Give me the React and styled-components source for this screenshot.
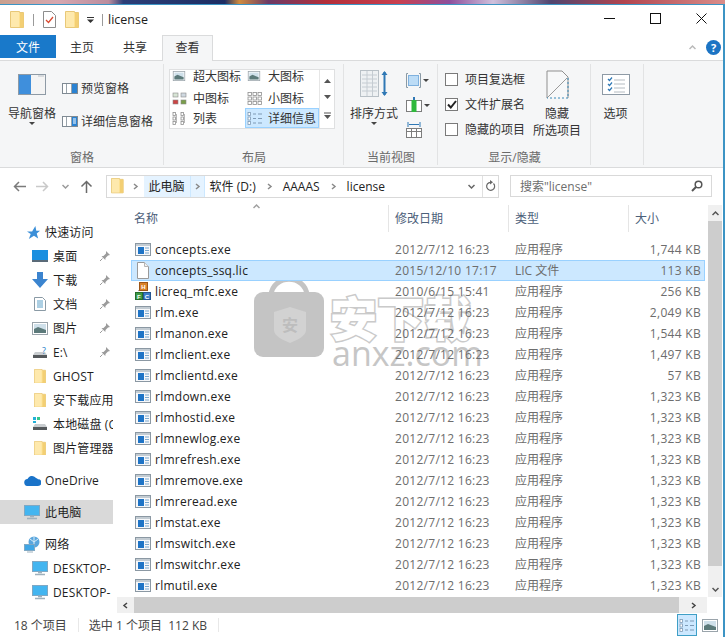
import React from 'react';
import styled, { createGlobalStyle } from 'styled-components';

const Global = createGlobalStyle`
  html, body { margin: 0; padding: 0; background: #fff; }
  body { font-family: "Open Sans", "Noto Sans CJK SC", sans-serif; font-size: 12px; color: #222; }
  * { box-sizing: border-box; }
  svg { display: block; flex: none; }
`;

const Page = styled.div`
  width: 725px; height: 637px; overflow: hidden; display: flex; flex-direction: column; background: #fff;
`;
const Wallpaper = styled.div`
  height: 4px; flex: none;
  background: linear-gradient(90deg, #c9a08e 0, #d6a7b0 8%, #bb8d9e 15%, #2c3f78 17%, #1d2d63 31%, #d08b3f 33%, #6c3a66 37%, #b42f3a 45%, #c94050 55%, #8e4f9c 62%, #cfc0dc 68%, #50456f 76%, #b2454f 86%, #d98d8a 100%);
`;
const Win = styled.div`
  flex: 1; min-height: 0; display: flex; flex-direction: column;
  border-top: 1px solid #3c94c4; border-right: 2px solid #3c94c4;
`;
const TitleBar = styled.div`
  height: 30px; flex: none; display: flex; align-items: center; padding: 0 0 1px 10px; position: relative;
`;
const TitleSep = styled.span`
  width: 1px; height: 12px; background: #9a9a9a; margin: ${p => p.$m || '0 9px'};
`;
const QatItem = styled.div`
  display: flex; align-items: center; margin-left: ${p => p.$ml}px;
`;
const TitleText = styled.span`
  font-size: 12.5px; color: #1c1c1c; margin-left: 5px; padding-bottom: 1px;
`;
const WinCtrls = styled.div`
  margin-left: auto; display: flex; align-items: center; gap: 35px; padding: 0 16px 2px 0;
`;
const TabRow = styled.div`
  height: 26px; flex: none; display: flex; align-items: flex-start; border-bottom: 1px solid #dadbdc;
`;
const FileTab = styled.div`
  width: 56px; height: 23px; background: #1979ca; color: #fff; display: flex; align-items: center; justify-content: center; font-size: 12px;
`;
const Tab = styled.div`
  width: ${p => p.$w}px; height: ${p => p.$active ? 26 : 23}px; display: flex; align-items: center; justify-content: center; font-size: 12px; color: #333;
  ${p => p.$active && `
    background: #f5f6f7; border: 1px solid #dadbdc; border-bottom: 0; padding-bottom: 3px;
  `}
`;
const TabEnd = styled.div`
  margin-left: auto; display: flex; align-items: center; gap: 10px; height: 24px; padding-right: 2px;
`;
const Ribbon = styled.div`
  height: 107px; flex: none; display: flex; background: #f5f6f7; border-bottom: 1px solid #dadbdc;
`;
const Group = styled.div`
  width: ${p => p.$w}px; flex: none; display: flex; flex-direction: column; position: relative;
  &::after { content: ""; position: absolute; right: 0; top: 3px; bottom: 2px; width: 1px; background: #e2e3e4; }
`;
const GroupBody = styled.div`
  flex: 1; min-height: 0; display: flex;
`;
const GroupLabel = styled.div`
  height: 22px; flex: none; display: flex; align-items: flex-start; justify-content: center; color: #6a6a6a; font-size: 12px; line-height: 25px;
`;
const LargeBtn = styled.div`
  width: ${p => p.$w}px; flex: none; display: flex; flex-direction: column; align-items: center; padding-top: ${p => p.$top}px; color: #333; line-height: 17px; font-size: 12px; white-space: nowrap;
`;
const LargeText = styled.div`
  margin-top: ${p => p.$mt}px; text-align: center;
`;
const Caret = styled.div`
  width: 0; height: 0; border-left: 3px solid transparent; border-right: 3px solid transparent; border-top: 3px solid #444;
`;
const SmallCol = styled.div`
  display: flex; flex-direction: column; gap: ${p => p.$gap}px; padding-top: ${p => p.$top}px; margin-left: ${p => p.$ml || 0}px;
`;
const SmallBtn = styled.div`
  display: flex; align-items: center; gap: 3px; color: #333; white-space: nowrap; height: 16px;
`;
const Gallery = styled.div`
  width: 166px; height: 60px; margin: 8px 0 0 5px; border: 1px solid #dfe0e1; background: #fff; display: flex;
`;
const GalleryGrid = styled.div`
  width: 149px; display: grid; grid-template-columns: 75px 74px; grid-template-rows: 18px 20px 20px; overflow: hidden;
`;
const GalleryItem = styled.div`
  display: flex; align-items: center; gap: ${p => p.$top ? 7 : 5}px; padding-left: 2px; color: #333; white-space: nowrap;
  ${p => p.$sel && 'background: #cce8ff; border: 1px solid #99d1ff; padding-left: 1px;'}
  ${p => p.$top && 'padding-bottom: 6px;'}
`;
const GalleryScroll = styled.div`
  flex: 1; border-left: 1px solid #e6e6e6; display: flex; flex-direction: column; align-items: center; justify-content: space-around; padding: 3px 0;
`;
const SortIconBtn = styled.div`
  display: flex; flex-direction: column; gap: 7px; padding-top: 10px; margin-left: 2px;
`;
const ViewIconRow = styled.div`
  display: flex; align-items: center; gap: 2px; height: 18px;
`;
const CheckCol = styled.div`
  display: flex; flex-direction: column; gap: 9px; padding: 10px 0 0 7px; width: 96px;
`;
const CheckRow = styled.div`
  display: flex; align-items: center; gap: 7px; height: 16px; color: #333; white-space: nowrap;
`;
const Check = styled.div`
  width: 13px; height: 13px; border: 1px solid #7a7a7a; background: #fff; display: flex; align-items: center; justify-content: center;
`;
const AddrRow = styled.div`
  height: 32px; flex: none; display: flex; align-items: center; padding-top: 4px;
`;
const NavBtns = styled.div`
  width: 106px; flex: none; display: flex; align-items: center; padding-left: 12px;
`;
const NavBtn = styled.div`
  width: ${p => p.$w}px; display: flex; justify-content: center;
`;
const AddrBox = styled.div`
  width: 393px; height: 23px; border: 1px solid #d9d9d9; display: flex; align-items: center; flex: none;
`;
const Crumb = styled.div`
  height: 21px; display: flex; align-items: center; color: #222; white-space: nowrap; padding: ${p => p.$pad || '0 5px'};
  ${p => p.$hover && 'background: #e5f3ff;'}
`;
const CrumbSep = styled.div`
  width: ${p => p.$w || 15}px; height: 21px; display: flex; align-items: center; justify-content: center;
  ${p => p.$hover && 'background: #e5f3ff; border-left: 1px solid #cce8ff; border-right: 1px solid #cce8ff;'}
`;
const AddrEnd = styled.div`
  margin-left: auto; display: flex; align-items: center; height: 21px;
`;
const AddrEndCell = styled.div`
  width: 16px; display: flex; align-items: center; justify-content: center; height: 21px;
  ${p => p.$line && 'border-left: 1px solid #e0e0e0; margin-left: 3px;'}
`;
const SearchBox = styled.div`
  width: 202px; height: 22px; margin-left: 11px; border: 1px solid #d9d9d9; display: flex; align-items: center; justify-content: space-between; padding: 0 8px 0 9px; color: #6d6d6d; flex: none;
`;
const Main = styled.div`
  flex: 1; min-height: 0; display: flex; position: relative;
`;
const Nav = styled.div`
  width: 113px; flex: none; padding-top: 20px; overflow: hidden;
`;
const NavGroup = styled.div`
  margin-bottom: 8px;
`;
const NavRow = styled.div`
  height: 24px; width: 113px; display: flex; align-items: center; padding-left: ${p => p.$ind}px; color: #1f1f1f; white-space: nowrap; overflow: hidden;
  ${p => p.$sel && 'background: #d9d9d9;'}
`;
const NavIcon = styled.div`
  width: ${p => p.$w || 21}px; flex: none; display: flex; align-items: center;
`;
const NavLabel = styled.span`
  flex: none; letter-spacing: .15px;
`;
const PinWrap = styled.div`
  position: absolute; left: 99px; width: 12px; height: 12px; display: flex;
`;
const NavRowWrap = styled.div`
  position: relative; display: flex; align-items: center;
`;
const FilePane = styled.div`
  margin-left: 4px; flex: 1; min-width: 0; display: grid; grid-template-columns: 1fr 16px; grid-template-rows: 397px 16px; position: relative;
`;
const ListArea = styled.div`
  padding-left: 14px; overflow: hidden; position: relative;
`;
const Header = styled.div`
  height: 35px; display: grid; grid-template-columns: 257px 120px 120px 80px; padding-top: 5px; position: relative;
`;
const HeadCell = styled.div`
  height: 27px; padding: 0 0 2px ${p => p.$first ? 3 : 6}px; display: flex; align-items: center; color: #4c607a; font-size: 12px;
  ${p => !p.$first && 'border-left: 1px solid #e5e5e5;'}
`;
const SortMark = styled.div`
  position: absolute; left: 122px; top: 3px;
`;
const Rows = styled.div`
  margin-top: 4px;
`;
const Row = styled.div`
  height: 21px; width: 574px; display: grid; grid-template-columns: 257px 120px 120px 77px; align-items: center; border: 1px solid transparent; padding-bottom: 2px; position: relative;
  ${p => p.$sel && 'background: #cce8ff; border-color: #99d1ff;'}
`;
const NameCell = styled.div`
  display: flex; align-items: center; gap: 4px; padding-left: 3px; color: #222; letter-spacing: .25px;
`;
const DetailCell = styled.div`
  color: #6d6d6d; padding-left: ${p => p.$right ? 0 : 6}px; padding-right: ${p => p.$right ? 5 : 0}px; text-align: ${p => p.$right ? 'right' : 'left'}; white-space: nowrap; letter-spacing: ${p => p.$sp || 0}px;
`;
const VScroll = styled.div`
  margin: 5px 1px 0 1px; background: #f0f0f0; display: flex; flex-direction: column; align-items: center; height: 392px;
`;
const ScrollEnd = styled.div`
  height: 16px; flex: none; width: 100%; display: flex; align-items: center; justify-content: center;
  ${p => p.$end && 'margin-top: auto;'}
`;
const VThumb = styled.div`
  width: 100%; height: 345px; background: #cdcdcd; flex: none;
`;
const HScroll = styled.div`
  background: #f0f0f0; display: flex; align-items: center;
`;
const HEnd = styled.div`
  width: ${p => p.$w}px; height: 100%; flex: none; display: flex; align-items: center; justify-content: center;
`;
const HThumb = styled.div`
  width: 545px; height: 100%; background: #cdcdcd; flex: none;
`;
const Status = styled.div`
  height: 22px; flex: none; display: flex; align-items: center; color: #444; padding: 0 0 2px 14px; position: relative;
`;
const StatusSep = styled.span`
  width: 1px; height: 14px; background: #e8e8e8; margin: ${p => p.$m};
`;
const ViewBtns = styled.div`
  margin-left: auto; display: flex; align-items: center; gap: 5px; padding-right: 6px; height: 100%;
`;
const ViewBtn = styled.div`
  width: ${p => p.$w}px; height: 22px; display: flex; align-items: center; justify-content: center;
  ${p => p.$on && 'background: #cce8ff; border: 1px solid #3f9fc6;'}
`;
const Watermark = styled.div`
  position: absolute; left: 254px; top: 77px; width: 216px; height: 90px; pointer-events: none; display: flex; gap: 6px;
`;
const WmText = styled.div`
  display: flex; flex-direction: column; align-items: flex-start; margin-top: 14px;
`;
const WmCjk = styled.div`
  font-family: "Noto Sans CJK SC", sans-serif; font-weight: 900; font-size: 47px; line-height: 50px; color: #fff;
  -webkit-text-stroke: 3px #cacaca; paint-order: stroke fill; white-space: nowrap;
`;
const WmLatin = styled.div`
  font-family: "Open Sans", sans-serif; font-size: 34px; line-height: 24px; color: #c6c6c6; white-space: nowrap; margin-left: 2px;
`;
const WmLockText = styled.text`
  font-family: "Noto Sans CJK SC", sans-serif; font-size: 16px; font-weight: 700; fill: #bdbdbd;
`;
const IconLetter = styled.text`
  font-family: "Liberation Sans", sans-serif; font-size: 6px; font-weight: 700; fill: #fff;
`;

const Folder = ({ s = 1 }) => (
  <svg width={14 * s} height={17 * s} viewBox="0 0 14 17">
    <path d="M.5.5h9v1h4v15H.5z" fill="#fde08f" stroke="#e8c878" />
    <path d="M10 2h3.5v14.5H10z" fill="#f3cf74" />
    <path d="M1 1h8v15H1z" fill="#fee9ad" />
  </svg>
);
const Exe = () => (
  <svg width="16" height="13" viewBox="0 0 16 13">
    <rect x=".5" y=".5" width="15" height="12" fill="#f7f8fa" stroke="#8b98a3" />
    <rect x="1" y="1" width="14" height="2" fill="#c3ccd3" />
    <rect x="3" y="4" width="6" height="7" fill="#1f74c6" />
    <path d="M10 5h4M10 7.5h4M10 10h4" stroke="#7aa7cd" />
  </svg>
);
const Doc = () => (
  <svg width="16" height="17" viewBox="0 0 16 17">
    <path d="M2.500.5h7l4 4v12h-11z" fill="#fff" stroke="#9a9a9a" />
    <path d="M9.500.5v4h4" fill="#f2f2f2" stroke="#b5b5b5" />
  </svg>
);
const ReqIcon = () => (
  <svg width="16" height="18" viewBox="0 0 16 18">
    <path d="M3 9l5-4 5 4" fill="none" stroke="#a7a7a7" />
    <rect x="4.500" y="0.500" width="8" height="8" fill="#d9822b" stroke="#9b5518" />
    <IconLetter x="6.300" y="7">H</IconLetter>
    <rect x=".5" y="10.500" width="7" height="7" fill="#3e9a45" stroke="#256d2c" />
    <IconLetter x="2" y="16.500">F</IconLetter>
    <rect x="8.500" y="10.500" width="7" height="7" fill="#3b7dc9" stroke="#25558f" />
    <IconLetter x="9.800" y="16.500">C</IconLetter>
  </svg>
);
const Pin = () => (
  <svg width="12" height="12" viewBox="0 0 12 12">
    <path d="M7 1l4 4-2 .5-2.500 2.500-.2 2L2.500 6.200l2-.3L7 3.500z" fill="#9b9b9b" />
    <path d="M3.500 8.500L1 11" stroke="#9b9b9b" />
  </svg>
);
const Chev = ({ c = '#8a8a8a', d = 'right' }) => (
  <svg width="7" height="7" viewBox="0 0 7 7">
    <path d={d === 'right' ? 'M2 1l3 2.500L2 6' : d === 'down' ? 'M.5 2L3.500 5 6.500 2' : d === 'up' ? 'M.5 5L3.500 2 6.500 5' : 'M5 1L2 3.500 5 6'} fill="none" stroke={c} strokeWidth="1.500" />
  </svg>
);
const Screen = ({ w = 16 }) => (
  <svg width={w} height="15" viewBox="0 0 16 15">
    <rect x=".5" y=".5" width="15" height="10" fill="#43b5f0" stroke="#7fa8c4" />
    <path d="M6 11.500h4M3 13.500h10" stroke="#9fb1bd" strokeWidth="1.500" />
  </svg>
);
const Photo = ({ w = 16, h = 13 }) => (
  <svg width={w} height={h} viewBox="0 0 16 13">
    <rect x=".5" y=".5" width="15" height="12" fill="#fff" stroke="#9aa4ab" />
    <rect x="2" y="2" width="12" height="9" fill="#cfe0ea" />
    <path d="M2 7l4-2 8 3v3H2z" fill="#5c7a7a" />
  </svg>
);
const TinyPhoto = ({ x, y, c = '#7c9' }) => <rect x={x} y={y} width="5" height="4" fill={c} stroke="#8a8a8a" strokeWidth=".6" />;
const ListGlyph = ({ kind }) => (
  <svg width="16" height="13" viewBox="0 0 16 13">
    {kind === 'medium' && <><TinyPhoto x="1" y="1" c="#d7e4d5" /><TinyPhoto x="9" y="1" c="#cfd8e0" /><TinyPhoto x="1" y="8" c="#c44" /><TinyPhoto x="9" y="8" c="#7a9e4a" /></>}
    {kind === 'small' && [0, 1, 2].map(r => [0, 1, 2].map(c => <rect key={`${r}${c}`} x={1 + c * 5} y={r * 4.500 + .5} width="3.500" height="3" fill="#fff" stroke="#8f8f8f" strokeWidth=".8" />))}
    {kind === 'list' && [0, 1].map(c => <g key={c}>{[0, 1, 2].map(r => <rect key={r} x={1 + c * 8} y={r * 4.500 + .5} width="2.500" height="3" fill="#fff" stroke="#8f8f8f" strokeWidth=".8" />)}<path d={`M${4.500 + c * 8} 2v9`} stroke="#b8b8b8" /></g>)}
    {kind === 'detail' && [0, 1, 2].map(r => <g key={r}><rect x="1" y={r * 4.500 + .5} width="2.500" height="3" fill="#fff" stroke="#7e9ab5" strokeWidth=".8" /><path d={`M6 ${r * 4.500 + 2}h3M11 ${r * 4.500 + 2}h4`} stroke="#7e9ab5" /></g>)}
  </svg>
);
const PaneIcon = ({ side }) => (
  <svg width="16" height="11" viewBox="0 0 16 11">
    <rect x=".5" y=".5" width="15" height="10" fill="#fff" stroke="#7f8a93" />
    <rect x="10" y="1" width="5" height="9" fill="#2a82d2" />
    <path d="M4.500 1v9M9.500 1v9" stroke="#9aa4ab" />
    {side === 'lines' && <path d="M11 3h3M11 5h3M11 7h3" stroke="#fff" />}
  </svg>
);

const files = [
  ['concepts.exe', '2012/7/12 16:23', '应用程序', '1,744 KB'],
  ['concepts_ssq.lic', '2015/12/10 17:17', 'LIC 文件', '113 KB', 'doc'],
  ['licreq_mfc.exe', '2010/6/15 15:41', '应用程序', '256 KB', 'req'],
  ['rlm.exe', '2012/7/12 16:23', '应用程序', '2,049 KB'],
  ['rlmanon.exe', '2012/7/12 16:23', '应用程序', '1,544 KB'],
  ['rlmclient.exe', '2012/7/12 16:23', '应用程序', '1,497 KB'],
  ['rlmclientd.exe', '2012/7/12 16:23', '应用程序', '57 KB'],
  ['rlmdown.exe', '2012/7/12 16:23', '应用程序', '1,323 KB'],
  ['rlmhostid.exe', '2012/7/12 16:23', '应用程序', '1,323 KB'],
  ['rlmnewlog.exe', '2012/7/12 16:23', '应用程序', '1,323 KB'],
  ['rlmrefresh.exe', '2012/7/12 16:23', '应用程序', '1,323 KB'],
  ['rlmremove.exe', '2012/7/12 16:23', '应用程序', '1,323 KB'],
  ['rlmreread.exe', '2012/7/12 16:23', '应用程序', '1,323 KB'],
  ['rlmstat.exe', '2012/7/12 16:23', '应用程序', '1,323 KB'],
  ['rlmswitch.exe', '2012/7/12 16:23', '应用程序', '1,323 KB'],
  ['rlmswitchr.exe', '2012/7/12 16:23', '应用程序', '1,323 KB'],
  ['rlmutil.exe', '2012/7/12 16:23', '应用程序', '1,323 KB'],
];

const Star = () => (
  <svg width="13" height="13" viewBox="0 0 14 14"><path d="M9 0l1 5h4l-3.500 3 1.500 5.500L7.500 10.500 2 14l2-5.500L0 6h5.500z" fill="#3b8fd8" /></svg>
);
const Desk = () => (
  <svg width="16" height="13" viewBox="0 0 16 13"><rect width="16" height="12" fill="#1a8fe0" /><rect y="10" width="16" height="2" fill="#5a6a78" /></svg>
);
const Down = () => (
  <svg width="16" height="16" viewBox="0 0 16 16"><path d="M5 0h6v7h5l-8 9-8-9h5z" fill="#3b84cf" /></svg>
);
const Docs = () => (
  <svg width="12" height="14" viewBox="0 0 12 14"><path d="M.5.5h8l3 3v10H.5z" fill="#fff" stroke="#8a9aa5" /><path d="M3 4h6M3 6h6M3 8h6M3 10h6" stroke="#5aa0c8" /></svg>
);
const Drive = ({ flag }) => (
  <svg width="15" height="14" viewBox="0 0 15 14">
    <path d="M2 7h10l2 3v3H0v-3z" fill="#c9cdd0" />
    <rect x="0" y="10" width="14" height="3" fill="#55595c" />
    {flag ? <><rect x="0" y="0" width="3" height="3" fill="#22b0d8" /><rect x="4" y="0" width="3" height="3" fill="#35c88a" /><rect x="0" y="4" width="3" height="2" fill="#22b0d8" /></> : <text x="9" y="9" fontSize="9" fill="#2a7fc9" fontFamily="Open Sans">?</text>}
  </svg>
);
const Cloud = () => (
  <svg width="17" height="11" viewBox="0 0 17 11"><path d="M4 11a3.500 3.500 0 0 1-.5-7A5 5 0 0 1 12 3a3.500 3.500 0 0 1 2 1.200A3.300 3.300 0 0 1 14 11z" fill="#1a73c9" /></svg>
);
const Globe = () => (
  <svg width="17" height="17" viewBox="0 0 17 17">
    <circle cx="10" cy="6" r="5.500" fill="#5aa6dd" />
    <path d="M6 3l4 3 4-3M10 .5v11" stroke="#d8ecf8" fill="none" />
    <rect x=".5" y="8.500" width="10" height="6" fill="#3fa6e5" stroke="#7fa8c4" />
    <path d="M3 16h6" stroke="#9fb1bd" />
  </svg>
);

const navGroups = [
  [
    { ind: 27, icon: <Star />, w: 18, t: '快速访问' },
    { ind: 32, icon: <Desk />, t: '桌面', pin: 1 },
    { ind: 32, icon: <Down />, t: '下载', pin: 1 },
    { ind: 34, icon: <Docs />, w: 19, t: '文档', pin: 1 },
    { ind: 32, icon: <Photo />, t: '图片', pin: 1 },
    { ind: 33, icon: <Drive />, w: 20, t: 'E:\\', pin: 1 },
    { ind: 34, icon: <Folder s={.85} />, w: 19, t: 'GHOST' },
    { ind: 34, icon: <Folder s={.85} />, w: 19, t: '安下载应用' },
    { ind: 33, icon: <Drive flag />, w: 20, t: '本地磁盘 (C' },
    { ind: 34, icon: <Folder s={.85} />, w: 19, t: '图片管理器' },
  ],
  [{ ind: 24, icon: <Cloud />, t: 'OneDrive' }],
  [{ ind: 24, icon: <Screen />, t: '此电脑', sel: 1 }],
  [
    { ind: 24, icon: <Globe />, t: '网络' },
    { ind: 32, icon: <Screen />, t: 'DESKTOP-' },
    { ind: 32, icon: <Screen />, t: 'DESKTOP-' },
  ],
];

const fileIcon = k => (k === 'doc' ? <Doc /> : k === 'req' ? <ReqIcon /> : <Exe />);

export default function App() {
  return (
    <Page>
      <Global />
      <Wallpaper />
      <Win>
        <TitleBar>
          <Folder />
          <TitleSep />
          <svg width="13" height="17" viewBox="0 0 13 17"><path d="M.5.5h8l4 4v12H.5z" fill="#fff" stroke="#8d8d8d" /><path d="M3 9l2.500 2.500L10 6" fill="none" stroke="#d9482f" strokeWidth="1.300" /></svg>
          <QatItem $ml={9}><Folder /></QatItem>
          <QatItem $ml={7}><svg width="9" height="8" viewBox="0 0 9 8"><path d="M1 1.500h7" stroke="#333" /><path d="M1 3.500h7L4.500 7z" fill="#333" /></svg></QatItem>
          <TitleSep $m="0 0 0 7px" />
          <TitleText>license</TitleText>
          <WinCtrls>
            <svg width="11" height="11" viewBox="0 0 11 11"><path d="M0 5.500h11" stroke="#111" /></svg>
            <svg width="11" height="11" viewBox="0 0 11 11"><rect x=".5" y=".5" width="10" height="10" fill="none" stroke="#111" /></svg>
            <svg width="11" height="11" viewBox="0 0 11 11"><path d="M.5.500l10 10M10.500.5l-10 10" stroke="#111" /></svg>
          </WinCtrls>
        </TitleBar>
        <TabRow>
          <FileTab>文件</FileTab>
          <Tab $w={52}>主页</Tab>
          <Tab $w={54}>共享</Tab>
          <Tab $w={51} $active>查看</Tab>
          <TabEnd>
            <Chev c="#b9b9b9" d="up" />
            <svg width="15" height="15" viewBox="0 0 15 15"><circle cx="7.500" cy="7.500" r="7.500" fill="#1c74c4" /><text x="7.500" y="11.500" textAnchor="middle" fontSize="11" fontWeight="700" fill="#fff" fontFamily="Open Sans">?</text></svg>
          </TabEnd>
        </TabRow>
        <Ribbon>
          <Group $w={164}>
            <GroupBody>
              <LargeBtn $w={64} $top={13}>
                <svg width="28" height="21" viewBox="0 0 28 21"><rect x=".5" y=".5" width="27" height="20" fill="#f4f4f4" stroke="#8e9aa5" /><rect x="1" y="1" width="12" height="19" fill="#3f8fdc" /><path d="M20 2h6" stroke="#b9c0c6" /></svg>
                <LargeText $mt={10}>导航窗格</LargeText>
                <Caret />
              </LargeBtn>
              <SmallCol $top={19} $gap={17} $ml={-2}>
                <SmallBtn><PaneIcon side="full" />预览窗格</SmallBtn>
                <SmallBtn><PaneIcon side="lines" />详细信息窗格</SmallBtn>
              </SmallCol>
            </GroupBody>
            <GroupLabel>窗格</GroupLabel>
          </Group>
          <Group $w={180}>
            <GroupBody>
              <Gallery>
                <GalleryGrid>
                  <GalleryItem $top><Photo w={14} h={10} />超大图标</GalleryItem>
                  <GalleryItem $top><Photo w={14} h={10} />大图标</GalleryItem>
                  <GalleryItem><ListGlyph kind="medium" />中图标</GalleryItem>
                  <GalleryItem><ListGlyph kind="small" />小图标</GalleryItem>
                  <GalleryItem><ListGlyph kind="list" />列表</GalleryItem>
                  <GalleryItem $sel><ListGlyph kind="detail" />详细信息</GalleryItem>
                </GalleryGrid>
                <GalleryScroll>
                  <svg width="7" height="5" viewBox="0 0 7 5"><path d="M3.500 0L7 4H0z" fill="#555" /></svg>
                  <svg width="7" height="5" viewBox="0 0 7 5"><path d="M3.500 4L7 0H0z" fill="#555" /></svg>
                  <svg width="7" height="7" viewBox="0 0 7 7"><path d="M0 1h7" stroke="#555" /><path d="M3.500 7L7 3H0z" fill="#555" /></svg>
                </GalleryScroll>
              </Gallery>
            </GroupBody>
            <GroupLabel>布局</GroupLabel>
          </Group>
          <Group $w={94}>
            <GroupBody>
              <LargeBtn $w={60} $top={9}>
                <svg width="29" height="28" viewBox="0 0 29 28"><rect x=".5" y=".5" width="18" height="26" fill="#eef1f3" stroke="#b8c0c6" /><path d="M2 5h15M2 9h15M2 13h15M2 17h15M2 21h15M7 1v25M12.500 1v25" stroke="#c5ccd2" /><path d="M24.500 2v23" stroke="#2f78b5" strokeWidth="2" /><path d="M21.500 5l3-4 3 4zM21.500 22l3 4 3-4z" fill="#2f78b5" /></svg>
                <LargeText $mt={7}>排序方式</LargeText>
                <Caret />
              </LargeBtn>
              <SortIconBtn>
                <ViewIconRow>
                  <svg width="15" height="15" viewBox="0 0 15 15"><path d="M2 .5H.5v14H2M13 .5h1.500v14H13" fill="none" stroke="#8a9aa5" /><rect x="2.500" y="2.500" width="10" height="10" fill="#bcdcf6" stroke="#7fb1de" /></svg>
                  <Caret />
                </ViewIconRow>
                <ViewIconRow>
                  <svg width="16" height="16" viewBox="0 0 16 16"><rect x=".5" y="3.500" width="15" height="11" fill="#fff" stroke="#7d7d7d" /><rect x="5.500" y="3" width="5" height="12" fill="#2fb83c" /><path d="M8 0v3" stroke="#2f78b5" strokeWidth="2" /></svg>
                  <Caret />
                </ViewIconRow>
                <ViewIconRow>
                  <svg width="16" height="18" viewBox="0 0 16 18"><path d="M2 1v5M14 1v5M3 3.500h10" stroke="#2f78b5" /><rect x=".5" y="7.500" width="15" height="9" fill="#fff" stroke="#7d7d7d" /><path d="M1 10.500h14M5.500 8v8M10.500 8v8" stroke="#7d7d7d" /></svg>
                </ViewIconRow>
              </SortIconBtn>
            </GroupBody>
            <GroupLabel>当前视图</GroupLabel>
          </Group>
          <Group $w={153}>
            <GroupBody>
              <CheckCol>
                <CheckRow><Check />项目复选框</CheckRow>
                <CheckRow><Check><svg width="10" height="9" viewBox="0 0 10 9"><path d="M1 4.500L3.800 7.500 9 1" fill="none" stroke="#222" strokeWidth="2" /></svg></Check>文件扩展名</CheckRow>
                <CheckRow><Check />隐藏的项目</CheckRow>
              </CheckCol>
              <LargeBtn $w={46} $top={9}>
                <svg width="23" height="29" viewBox="0 0 23 29"><path d="M1 28V1h15l6 6v21" fill="#f7f8f9" stroke="#8f8f8f" /><path d="M1 28L21 8" stroke="#9a9a9a" /><path d="M22 8v20H1" fill="none" stroke="#3b8ab8" strokeDasharray="2 2" /></svg>
                <LargeText $mt={6}>隐藏<br />所选项目</LargeText>
              </LargeBtn>
            </GroupBody>
            <GroupLabel>显示/隐藏</GroupLabel>
          </Group>
          <Group $w={53}>
            <GroupBody>
              <LargeBtn $w={49} $top={13}>
                <svg width="28" height="21" viewBox="0 0 28 21"><rect x=".5" y=".5" width="27" height="20" fill="#fff" stroke="#8e9aa5" /><path d="M12 6h11M12 10h11M12 14h11M12 18h11" stroke="#b5bcc2" /><path d="M6 5l1.500 1.500L10 3.500M6 10l1.500 1.500L10 8.500M6 15l1.500 1.500L10 13.500" fill="none" stroke="#2f78b5" strokeWidth="1.200" /></svg>
                <LargeText $mt={10}>选项</LargeText>
              </LargeBtn>
            </GroupBody>
          </Group>
        </Ribbon>
        <AddrRow>
          <NavBtns>
            <NavBtn $w={15}><svg width="13" height="11" viewBox="0 0 13 11"><path d="M13 5.500H1.500M6 1L1.500 5.500 6 10" fill="none" stroke="#7b7b7b" strokeWidth="1.500" /></svg></NavBtn>
            <NavBtn $w={30}><svg width="13" height="11" viewBox="0 0 13 11"><path d="M0 5.500h11.500M7 1l4.500 4.500L7 10" fill="none" stroke="#c9c9c9" strokeWidth="1.500" /></svg></NavBtn>
            <NavBtn $w={16}><Chev c="#9a9a9a" d="down" /></NavBtn>
            <NavBtn $w={26}><svg width="13" height="13" viewBox="0 0 13 13"><path d="M6.500 13V1.500M1.500 6.500l5-5 5 5" fill="none" stroke="#6a6a6a" strokeWidth="1.500" /></svg></NavBtn>
          </NavBtns>
          <AddrBox>
            <Crumb $pad="0 4px"><Folder s={.9} /></Crumb>
            <CrumbSep $w={16}><Chev /></CrumbSep>
            <Crumb $hover>此电脑</Crumb>
            <CrumbSep $hover $w={15}><Chev /></CrumbSep>
            <Crumb>软件 (D:)</Crumb>
            <CrumbSep $w={17}><Chev /></CrumbSep>
            <Crumb>AAAAS</Crumb>
            <CrumbSep $w={17}><Chev /></CrumbSep>
            <Crumb>license</Crumb>
            <AddrEnd>
              <AddrEndCell><Chev c="#666" d="down" /></AddrEndCell>
              <AddrEndCell $line><svg width="11" height="12" viewBox="0 0 11 12"><path d="M8.500 3.500a4 4 0 1 1-3-1.200" fill="none" stroke="#666" strokeWidth="1.200" /><path d="M5 0l3 2.300L5 4.500z" fill="#666" /></svg></AddrEndCell>
            </AddrEnd>
          </AddrBox>
          <SearchBox>
            搜索"license"
            <svg width="12" height="12" viewBox="0 0 12 12"><circle cx="7.500" cy="4.500" r="3.300" fill="none" stroke="#555" strokeWidth="1.500" /><path d="M5 7l-4 4" stroke="#555" strokeWidth="2" /></svg>
          </SearchBox>
        </AddrRow>
        <Main>
          <Watermark>
            <svg width="70" height="80" viewBox="0 0 70 80">
              <path d="M17 18C19 -3 51 -3 53 18" fill="none" stroke="#c4c4c4" strokeWidth="5" />
              <rect x="0" y="15" width="70" height="65" rx="9" fill="#c4c4c4" />
              <path d="M20 35l16-5 16 5v18c0 6-9 10-16 13-7-3-16-7-16-13z" fill="#d2d2d2" />
              <WmLockText x="36" y="54" textAnchor="middle">安</WmLockText>
            </svg>
            <WmText>
              <WmCjk>安下载</WmCjk>
              <WmLatin>anxz.com</WmLatin>
            </WmText>
          </Watermark>
          <Nav>
            {navGroups.map((g, i) => (
              <NavGroup key={i}>
                {g.map((r, j) => (
                  <NavRowWrap key={j}>
                    <NavRow $ind={r.ind} $sel={r.sel}>
                      <NavIcon $w={r.w}>{r.icon}</NavIcon>
                      <NavLabel>{r.t}</NavLabel>
                    </NavRow>
                    {r.pin && <PinWrap><Pin /></PinWrap>}
                  </NavRowWrap>
                ))}
              </NavGroup>
            ))}
          </Nav>
          <FilePane>
            <ListArea>
              <Header>
                <HeadCell $first>名称</HeadCell>
                <HeadCell>修改日期</HeadCell>
                <HeadCell>类型</HeadCell>
                <HeadCell>大小</HeadCell>
                <SortMark><Chev c="#a0a0a0" d="up" /></SortMark>
              </Header>
              <Rows>
                {files.map(f => (
                  <Row key={f[0]} $sel={f[4] === 'doc'}>
                    <NameCell>{fileIcon(f[4])}{f[0]}</NameCell>
                    <DetailCell $sp={.28}>{f[1]}</DetailCell>
                    <DetailCell>{f[2]}</DetailCell>
                    <DetailCell $right $sp={.3}>{f[3]}</DetailCell>
                  </Row>
                ))}
              </Rows>
            </ListArea>
            <VScroll>
              <ScrollEnd><Chev c="#555" d="up" /></ScrollEnd>
              <VThumb />
              <ScrollEnd $end><Chev c="#555" d="down" /></ScrollEnd>
            </VScroll>
            <HScroll>
              <HEnd $w={17}><Chev c="#444" d="left" /></HEnd>
              <HThumb />
              <HEnd $w={28}><Chev c="#444" /></HEnd>
            </HScroll>
            <span />
          </FilePane>
        </Main>
        <Status>
          18 个项目
          <StatusSep $m="0 10px 0 11px" />
          选中 1 个项目&nbsp;&nbsp;112 KB
          <StatusSep $m="0 0 0 11px" />
          <ViewBtns>
            <ViewBtn $w={20} $on><ListGlyph kind="detail" /></ViewBtn>
            <ViewBtn $w={15}><Photo /></ViewBtn>
          </ViewBtns>
        </Status>
      </Win>
    </Page>
  );
}
